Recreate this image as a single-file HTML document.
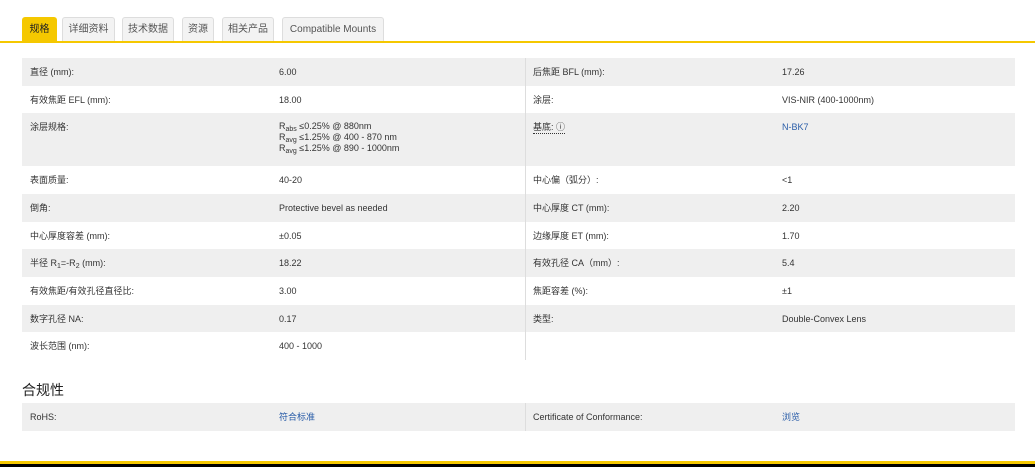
<!DOCTYPE html>
<html><head><meta charset="utf-8"><style>
*{margin:0;padding:0;box-sizing:border-box}
body{width:1035px;height:467px;overflow:hidden;background:#fff;font-family:"Liberation Sans","Noto Sans CJK SC",sans-serif;font-size:9px;color:#333;position:relative}
.tab{position:absolute;top:17px;height:24px;border:1px solid #ddd;border-bottom:none;background:#f3f3f3;border-radius:3px 3px 0 0;font-size:10px;line-height:24px;color:#555;text-align:center}
.tab.a{background:#f5c800;border-color:#f5c800;color:#222}
.line{position:absolute;left:0;top:41px;width:1035px;height:2px;background:#f5c800}
.row{position:absolute;left:22px;width:993px}
.g{background:#efefef}
.c{position:absolute;top:8px;white-space:nowrap;line-height:12px;height:12px}
.l{font-weight:bold;color:#333}
.v{position:absolute;left:525px;width:1px;background:#ddd}
.blue{color:#2a5da8}
sub{font-size:7px;vertical-align:-2px;line-height:0}
</style></head><body>
<div class="tab a" style="left:22px;width:35px">规格</div>
<div class="tab" style="left:62px;width:53px">详细资料</div>
<div class="tab" style="left:122px;width:52px">技术数据</div>
<div class="tab" style="left:182px;width:32px">资源</div>
<div class="tab" style="left:222px;width:52px">相关产品</div>
<div class="tab" style="left:282px;width:102px">Compatible Mounts</div>
<div class="line"></div>

<div class="row g" style="top:58px;height:28px"><span class="c" style="left:8px">直径 (mm):</span><span class="c" style="left:257px">6.00</span><span class="c" style="left:511px">后焦距 BFL (mm):</span><span class="c" style="left:760px">17.26</span></div>
<div class="row" style="top:86px;height:27px"><span class="c" style="left:8px">有效焦距 EFL (mm):</span><span class="c" style="left:257px">18.00</span><span class="c" style="left:511px">涂层:</span><span class="c" style="left:760px">VIS-NIR (400-1000nm)</span></div>
<div class="row g" style="top:113px;height:53px"><span class="c" style="left:8px">涂层规格:</span><span class="c" style="left:257px;height:auto;line-height:11px">R<sub>abs</sub> ≤0.25% @ 880nm<br>R<sub>avg</sub> ≤1.25% @ 400 - 870 nm<br>R<sub>avg</sub> ≤1.25% @ 890 - 1000nm</span><span class="c" style="left:511px;border-bottom:1px dotted #333;height:13px">基底: ⓘ</span><span class="c blue" style="left:760px">N-BK7</span></div>
<div class="row" style="top:166px;height:28px"><span class="c" style="left:8px">表面质量:</span><span class="c" style="left:257px">40-20</span><span class="c" style="left:511px">中心偏（弧分）:</span><span class="c" style="left:760px">&lt;1</span></div>
<div class="row g" style="top:194px;height:28px"><span class="c" style="left:8px">倒角:</span><span class="c" style="left:257px">Protective bevel as needed</span><span class="c" style="left:511px">中心厚度 CT (mm):</span><span class="c" style="left:760px">2.20</span></div>
<div class="row" style="top:222px;height:27px"><span class="c" style="left:8px">中心厚度容差 (mm):</span><span class="c" style="left:257px">±0.05</span><span class="c" style="left:511px">边缘厚度 ET (mm):</span><span class="c" style="left:760px">1.70</span></div>
<div class="row g" style="top:249px;height:28px"><span class="c" style="left:8px">半径 R<sub>1</sub>=-R<sub>2</sub> (mm):</span><span class="c" style="left:257px">18.22</span><span class="c" style="left:511px">有效孔径 CA（mm）:</span><span class="c" style="left:760px">5.4</span></div>
<div class="row" style="top:277px;height:28px"><span class="c" style="left:8px">有效焦距/有效孔径直径比:</span><span class="c" style="left:257px">3.00</span><span class="c" style="left:511px">焦距容差 (%):</span><span class="c" style="left:760px">±1</span></div>
<div class="row g" style="top:305px;height:27px"><span class="c" style="left:8px">数字孔径 NA:</span><span class="c" style="left:257px">0.17</span><span class="c" style="left:511px">类型:</span><span class="c" style="left:760px">Double-Convex Lens</span></div>
<div class="row" style="top:332px;height:28px"><span class="c" style="left:8px">波长范围 (nm):</span><span class="c" style="left:257px">400 - 1000</span></div>
<div class="v" style="top:58px;height:302px"></div>

<div style="position:absolute;left:22px;top:381px;font-size:14px;line-height:18px;color:#222">合规性</div>
<div class="row g" style="top:403px;height:28px"><span class="c" style="left:8px">RoHS:</span><span class="c blue" style="left:257px">符合标准</span><span class="c" style="left:511px">Certificate of Conformance:</span><span class="c blue" style="left:760px">浏览</span></div>
<div class="v" style="top:403px;height:28px"></div>

<div style="position:absolute;left:0;top:461px;width:1035px;height:3px;background:#f5c800"></div>
<div style="position:absolute;left:0;top:464px;width:1035px;height:3px;background:#000"></div>
</body></html>
